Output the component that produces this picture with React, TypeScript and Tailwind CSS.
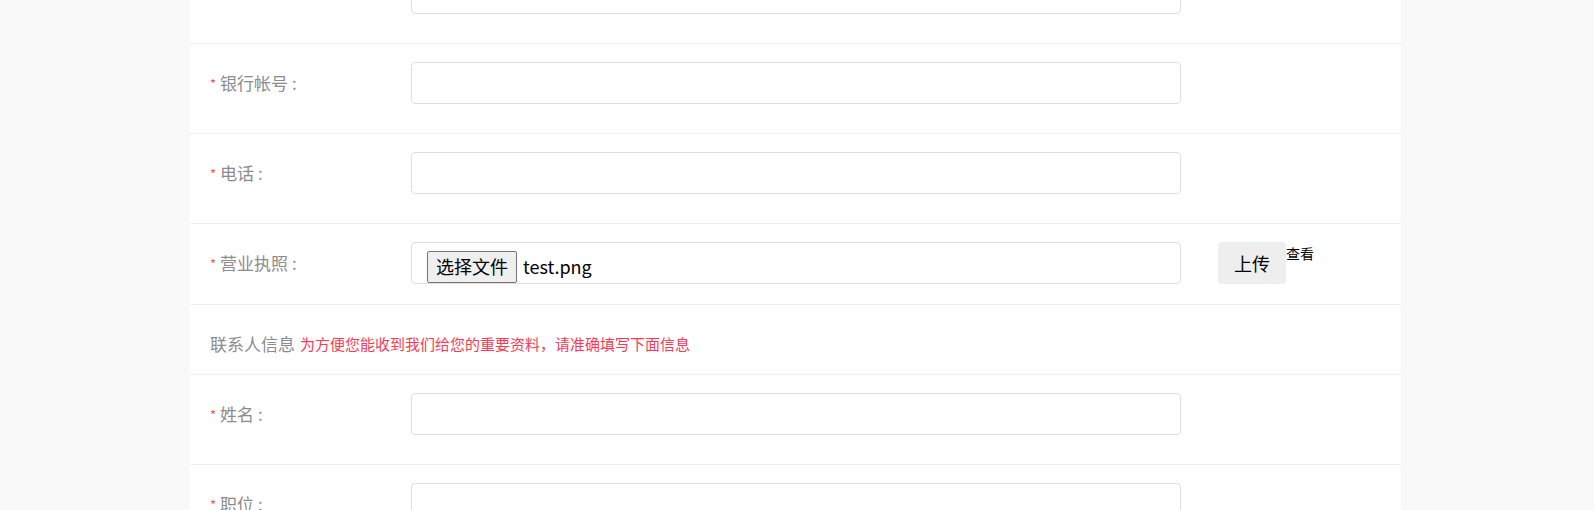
import React from 'react';

const font = { fontFamily: '"Noto Sans CJK SC", "Noto Sans", sans-serif' };

const Label = ({ text }: { text?: string }) => (
  <div className="w-[201px] h-[42px] flex items-center shrink-0">
    {text && (
      <>
        <span className="text-[#f5555b] text-[13px] mr-[4px] mt-[2px]">*</span>
        <span className="text-[17px] text-[#8c8c8c]">
          {text}
          <span className="ml-[4px]">:</span>
        </span>
      </>
    )}
  </div>
);

const FieldRow = ({ label, className = '' }: { label?: string; className?: string }) => (
  <div className={`flex items-start px-[20px] pt-[18px] pb-[29px] border-b border-[#eeeeee] ${className}`}>
    <Label text={label} />
    <input className="w-[770px] h-[42px] border border-[#dddddd] rounded-[4px] bg-white outline-none" />
  </div>
);

export default function App() {
  return (
    <div className="w-full h-[510px] overflow-hidden bg-[#f9f9f9]" style={font}>
      <div className="w-[1211px] ml-[190px] bg-white">
        {/* row scrolled past the top edge */}
        <FieldRow className="-mt-[46px]" />
        <FieldRow label="银行帐号" />
        <FieldRow label="电话" />

        <div className="flex items-start px-[20px] pt-[18px] pb-[20px] border-b border-[#eeeeee]">
          <Label text="营业执照" />
          <div className="w-[770px] h-[42px] border border-[#dddddd] rounded-[4px] bg-white flex items-center pl-[15px] pt-[7px]">
            <span className="h-[32px] px-[8px] flex items-center bg-[#efefef] border border-[#767676] rounded-[2px] text-[18px] text-black">
              选择文件
            </span>
            <span className="ml-[6px] text-[18px] text-black">test.png</span>
          </div>
          <button className="ml-[37px] w-[68px] h-[42px] bg-[#eeeeee] rounded-[4px] text-[18px] text-black">上传</button>
          <span className="text-[14px] text-black mt-[1px] leading-[20px]">查看</span>
        </div>

        <div className="h-[70px] flex items-center px-[20px] pt-[8px] border-b border-[#eeeeee]">
          <span className="text-[17px] text-[#8c8c8c]">联系人信息</span>
          <span className="ml-[5px] text-[15px] text-[#f83b55] mt-[1px]">为方便您能收到我们给您的重要资料，请准确填写下面信息</span>
        </div>

        <FieldRow label="姓名" />
        <FieldRow label="职位" />
      </div>
    </div>
  );
}
